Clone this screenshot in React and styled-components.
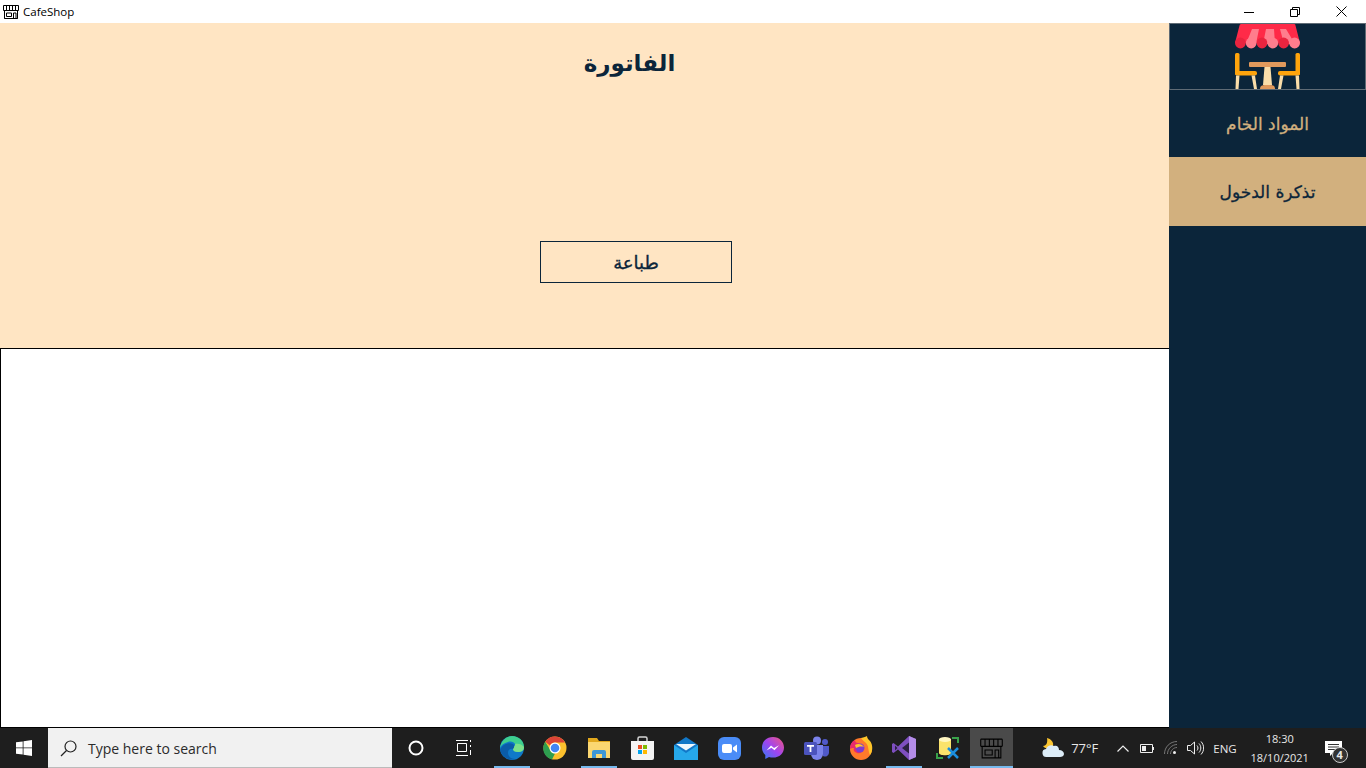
import React from 'react';
import styled, { createGlobalStyle } from 'styled-components';

const GlobalStyle = createGlobalStyle`
    html, body {
        margin: 0;
        padding: 0;
        width: 1366px;
        height: 768px;
        overflow: hidden;
        background: #fff;
        font-family: "Liberation Sans", Arial, sans-serif;
    }
`;

const Screen = styled.div`
    width: 1366px;
    height: 768px;
    display: flex;
    flex-direction: column;
`;

const TitleBar = styled.div`
    height: 23px;
    flex: none;
    display: flex;
    align-items: center;
    background: #fff;
    padding-left: 3px;
    font-family: "Open Sans", "Noto Sans", sans-serif;
    font-size: 11.5px;
    color: #000;
`;

const AppName = styled.span`
    margin-left: 4px;
    flex: 1;
`;

const WinButtons = styled.div`
    display: flex;
    margin-right: 2px;
`;

const WinButton = styled.div`
    width: 46px;
    height: 23px;
    display: flex;
    align-items: center;
    justify-content: center;
`;

const Body = styled.div`
    flex: 1;
    display: flex;
    min-height: 0;
`;

const Content = styled.div`
    flex: 1;
    display: flex;
    flex-direction: column;
`;

const Header = styled.div`
    height: 325px;
    flex: none;
    background: #ffe5c3;
    display: flex;
    flex-direction: column;
    color: #0b253a;
    font-family: "DejaVu Sans", sans-serif;
`;

const Title = styled.h1`
    margin: 24px 0 0 90px;
    font-size: 23px;
    line-height: 32px;
    font-weight: 700;
    text-align: center;
`;

const PrintButton = styled.button`
    width: 192px;
    height: 42px;
    margin: 162px 0 0 540px;
    padding: 0;
    box-sizing: border-box;
    background: transparent;
    border: 1px solid #0b253a;
    color: #0b253a;
    font-family: "DejaVu Sans", sans-serif;
    font-size: 18px;
    font-weight: 400;
    -webkit-text-stroke: 0.35px #0b253a;
`;

const Report = styled.div`
    flex: 1;
    background: #fff;
    border: 1px solid #000;
    border-right: none;
`;

const Sidebar = styled.div`
    width: 197px;
    flex: none;
    background: #0b253a;
    display: flex;
    flex-direction: column;
    font-family: "DejaVu Sans", sans-serif;
`;

const LogoBox = styled.div`
    height: 67px;
    box-sizing: border-box;
    border: 1px solid #5f6b75;
    overflow: hidden;
    display: flex;
    justify-content: center;
`;

const NavItem = styled.div`
    height: ${p => (p.$active ? 69 : 67)}px;
    display: flex;
    align-items: center;
    justify-content: center;
    font-size: 17px;
    font-weight: 400;
    -webkit-text-stroke: 0.3px ${p => (p.$active ? '#0b253a' : '#d2b07e')};
    background: ${p => (p.$active ? '#d2b07e' : 'transparent')};
    color: ${p => (p.$active ? '#0b253a' : '#d2b07e')};
`;

const Taskbar = styled.div`
    height: 40px;
    flex: none;
    display: flex;
    align-items: stretch;
    background: #1e1e1e;
    color: #fff;
    font-family: "Open Sans", "Noto Sans", sans-serif;
`;

const StartButton = styled.div`
    width: 48px;
    display: flex;
    align-items: center;
    justify-content: center;
`;

const SearchBox = styled.div`
    width: 344px;
    box-sizing: border-box;
    background: #f1f1f1;
    border-bottom: 1px solid #bbb;
    display: flex;
    align-items: center;
    padding: 1px 0 0 12px;
    gap: 11px;
    color: #2b2b2b;
    font-size: 14px;
`;

const ToolSlot = styled.div`
    width: 48px;
    display: flex;
    align-items: center;
    justify-content: center;
`;

const AppSlots = styled.div`
    display: flex;
    margin-left: 2px;
    margin-right: 29px;
`;

const AppSlot = styled.div`
    position: relative;
    width: 43.6px;
    display: flex;
    align-items: center;
    justify-content: center;
    background: ${p => (p.$focused ? '#4a4a4a' : 'transparent')};

    &::after {
        content: '';
        display: ${p => (p.$open || p.$focused ? 'block' : 'none')};
        position: absolute;
        bottom: 0;
        left: ${p => (p.$focused ? 0 : 4)}px;
        right: ${p => (p.$focused ? 0 : 4)}px;
        height: 2px;
        background: #76b9ed;
    }
`;

const Tray = styled.div`
    flex: 1;
    display: flex;
    align-items: center;
    font-size: 12px;
    color: #e8e8e8;
`;

const Temp = styled.span`
    margin: 0 13px 0 7px;
    font-size: 13px;
`;

const TrayIcon = styled.div`
    width: 24px;
    display: flex;
    justify-content: center;
`;

const Lang = styled.span`
    margin: 0 6px 0 6px;
    font-size: 11.5px;
`;

const Clock = styled.div`
    width: 74px;
    font-size: 11px;
    text-align: center;
    line-height: 19px;
`;

const Notify = styled.div`
    position: relative;
    margin-left: 8px;
    width: 24px;
    display: flex;
`;

const Badge = styled.span`
    position: absolute;
    left: 7px;
    top: 6px;
    width: 14px;
    height: 14px;
    border-radius: 50%;
    background: #333;
    border: 1px solid #ccc;
    display: flex;
    align-items: center;
    justify-content: center;
    font-size: 11px;
    font-weight: 700;
`;

const ShowDesktop = styled.div`
    width: 1px;
    margin-left: 15px;
    background: #777;
`;

const ShopGlyph = ({ color = '#000', size = 16, weight = 1 }) => (
    <svg width={size} height={size} viewBox="0 0 16 16" fill="none" stroke={color} strokeWidth={weight}>
        <path d="M.5 1.500h15M.5 6.500h15M.5 1.500v5M15.500 1.500v5M3.500 1.500v5M6.500 1.500v5M9.500 1.500v5M12.500 1.500v5" />
        <path d="M1.500 6.500v8h13v-8M1.500 14.500h13M3.500 9h5v3.500h-5zM10.500 14.500V9h2.500v5.500" />
    </svg>
);

const Logo = () => (
    <svg width="65" height="65" viewBox="0 0 65 65">
        <path d="M6 0h53a1.500 1.500 0 0 1 1.500 1.500L65 19H0L4.500 1.500A1.500 1.500 0 0 1 6 0z" fill="#ff2a48" />
        <path d="M17 5h7l-3 15H11zM31 5h8l1 15H28zM51 5h-6l4 15h11z" fill="#ff7d8d" />
        <circle cx="5.400" cy="19" r="5.400" fill="#e9243f" />
        <circle cx="16.200" cy="19" r="5.400" fill="#ff7d8d" />
        <circle cx="27" cy="19" r="5.400" fill="#e9243f" />
        <circle cx="37.800" cy="19" r="5.400" fill="#ff7d8d" />
        <circle cx="48.600" cy="19" r="5.400" fill="#e9243f" />
        <circle cx="59.600" cy="19" r="5.400" fill="#ff7d8d" />
        <rect x="14" y="38" width="37" height="5" rx="1" fill="#e0995c" />
        <path d="M29.500 43h6l1.500 18h-9z" fill="#f9dda9" />
        <path d="M25 65c0-4 3-4 7.500-4s7.500 0 7.500 4z" fill="#e0995c" />
        <rect x="0" y="29" width="4.500" height="22" rx="1.500" fill="#ffa40c" />
        <rect x="0" y="47" width="22" height="4.500" rx="2" fill="#ffa40c" />
        <rect x="60.500" y="29" width="4.500" height="22" rx="1.500" fill="#ffa40c" />
        <rect x="43" y="47" width="22" height="4.500" rx="2" fill="#ffa40c" />
        <path d="M1 51.500h3.500L3.500 65H.5zM16.500 51.500H20L22 65h-3zM45 51.500h3.500L46 65h-3zM60.500 51.500H64L64.500 65h-3z" fill="#f9dda9" />
    </svg>
);

const WindowsLogo = () => (
    <svg width="16" height="16" viewBox="0 0 16 16" fill="#fff">
        <path d="M0 2.300l6.700-.9v6.100H0zM7.500 1.300L16 0v7.500H7.500zM0 8.300h6.700v6.300L0 13.700zM7.500 8.300H16V16l-8.500-1.200z" />
    </svg>
);

const Edge = () => (
    <svg width="26" height="26" viewBox="0 0 26 26">
        <circle cx="13" cy="13" r="12" fill="#0f79c9" />
        <path d="M1 13C2 5 8 1 13 1c7 0 12 5 12 11 0 4-3 5-6 5-3 0-5-1-5-3 0-3 3-3 2-5-1-2-4-3-7-2-4 1-7 3-8 6z" fill="#3ecf8e" />
        <path d="M25 12c0 4-3 5-6 5s-5-1-5-3c0-3 3-3 2-5 3-1 7 0 9 3z" fill="#7be08a" />
        <path d="M14 14c-3-1-5 1-5 4 0 3 3 6 7 6-6 2-13-2-15-9 2-5 8-8 13-6 1 1 2 3 0 5z" fill="#0b5ca8" />
    </svg>
);

const Chrome = () => (
    <svg width="24" height="24" viewBox="0 0 24 24">
        <circle cx="12" cy="12" r="11.500" fill="#fbc02d" />
        <path d="M12 .5A11.500 11.500 0 0 1 22 6.500H12a5.500 5.500 0 0 0-5 3L2.200 5.800A11.500 11.500 0 0 1 12 .5z" fill="#dc4437" />
        <path d="M2.200 5.800L7 13.500a5.500 5.500 0 0 0 5 4l-3 6A11.500 11.500 0 0 1 2.200 5.800z" fill="#2e9e4f" />
        <circle cx="12" cy="12" r="5.500" fill="#fff" />
        <circle cx="12" cy="12" r="4.300" fill="#4285f4" />
    </svg>
);

const Explorer = () => (
    <svg width="22" height="20" viewBox="0 0 22 20">
        <path d="M0 0h9l2 3h11v17H0z" fill="#e2a81d" />
        <rect y="4" width="22" height="16" fill="#fbd771" />
        <path d="M4 20v-6a2 2 0 0 1 2-2h10a2 2 0 0 1 2 2v6h-4v-4H8v4z" fill="#3f97d6" />
    </svg>
);

const Store = () => (
    <svg width="23" height="24" viewBox="0 0 23 24">
        <path d="M7 6V2.500Q7 1 8.500 1h6Q16 1 16 2.500V6" fill="none" stroke="#d5d5d5" strokeWidth="1.500" />
        <path d="M0 5h23v17a2 2 0 0 1-2 2H2a2 2 0 0 1-2-2z" fill="#f4f4f4" />
        <rect x="7" y="9" width="4" height="4" fill="#ea4f25" />
        <rect x="12" y="9" width="4" height="4" fill="#7fba00" />
        <rect x="7" y="14" width="4" height="4" fill="#00a4ef" />
        <rect x="12" y="14" width="4" height="4" fill="#ffb900" />
    </svg>
);

const Mail = () => (
    <svg width="24" height="23" viewBox="0 0 24 23">
        <path d="M0 8L12 0l12 8v15H0z" fill="#1177c7" />
        <path d="M0 8l12 8 12-8v15H0z" fill="#26a8ea" />
        <path d="M2 7h20l-10 6.500z" fill="#eef7fd" />
    </svg>
);

const Zoom = () => (
    <svg width="23" height="23" viewBox="0 0 23 23">
        <rect width="23" height="23" rx="6" fill="#4a8cf7" />
        <rect x="4" y="7" width="10" height="9" rx="2" fill="#fff" />
        <path d="M15 10.500l4-3v8l-4-3z" fill="#fff" />
    </svg>
);

const Messenger = () => (
    <svg width="24" height="24" viewBox="0 0 24 24">
        <defs>
            <linearGradient id="msg" x1="0" y1="1" x2="1" y2="0">
                <stop offset="0" stopColor="#2f7cf6" />
                <stop offset=".5" stopColor="#a044f0" />
                <stop offset="1" stopColor="#f3577f" />
            </linearGradient>
        </defs>
        <path d="M12 1C5.500 1 1 5.500 1 11.500c0 3 1.200 5.600 3.300 7.400V23l3.700-2c1.300.4 2.600.6 4 .6 6.500 0 11-4.500 11-10.100S18.500 1 12 1z" fill="url(#msg)" />
        <path d="M5.500 14.500l4.500-5 3 2.500 5-2.800-4.500 5-3-2.500z" fill="#fff" />
    </svg>
);

const Teams = () => (
    <svg width="25" height="24" viewBox="0 0 25 24">
        <circle cx="13" cy="4.500" r="4" fill="#7b83eb" />
        <circle cx="21" cy="6" r="3" fill="#5059c9" />
        <path d="M17 10h8v7a4 4 0 0 1-6 3z" fill="#5059c9" />
        <path d="M7 9h12v9a6 6 0 0 1-12 0z" fill="#7b83eb" />
        <rect y="6" width="13" height="13" rx="1.500" fill="#4b53bc" />
        <path d="M3 9h7v1.800H7.400V16H5.600v-5.200H3z" fill="#fff" />
    </svg>
);

const Firefox = () => (
    <svg width="24" height="24" viewBox="0 0 24 24">
        <circle cx="12" cy="13" r="11" fill="#ff7a2b" />
        <path d="M12 2c3-1 5-1 6-2 0 2 1 3 3 5 3 4 3 10 0 14-2-4-1-9-4-12-2-2-4-3-5-5z" fill="#ffc62a" />
        <path d="M1 13C1 7 4 5 6 4c0 2 1 3 3 3 3 1 5 3 5 6 0 3-3 5-6 4-3-1-4-3-3-5-2 0-3 0-4 1z" fill="#e92a6b" />
        <circle cx="11" cy="12" r="4.500" fill="#7e3bd0" />
        <path d="M6 9c3-2 7-1 9 2-3-1-6 0-8 1z" fill="#ffc62a" />
    </svg>
);

const VisualStudio = () => (
    <svg width="24" height="24" viewBox="0 0 24 24">
        <path d="M17 0l7 3v18l-7 3-11-10.500L1.500 17 0 16V8l1.500-1L6 10.500z" fill="#7e4fc0" />
        <path d="M17 0l7 3v18l-7 3z" fill="#b48de8" />
        <path d="M17 6.500L10 12l7 5.500zM3 9.500v5l2.500-2.500z" fill="#2b2140" />
    </svg>
);

const DataTool = () => (
    <svg width="24" height="24" viewBox="0 0 24 24" fill="none">
        <path d="M3 3v14c0 3 12 3 12 0V3z" fill="#fbe36b" />
        <ellipse cx="9" cy="3.500" rx="6" ry="2.500" fill="#fff6c0" />
        <path d="M16 2h6v5M1 17v5h6" stroke="#39a24a" strokeWidth="2" />
        <path d="M12 12l10 10M22 12L12 22" stroke="#1c8fe0" strokeWidth="2.500" />
    </svg>
);

const Weather = () => (
    <svg width="22" height="20" viewBox="0 0 22 20">
        <path d="M1 8c3 0 5-3 4-8 4 1 7 4 6 8-1 3-7 4-10 0z" fill="#fbc531" />
        <path d="M5 19a4 4 0 0 1-1-8c1-3 5-5 8-3 3-1 5 1 5 4 3 0 5 2 5 4s-2 3-4 3z" fill="#dcecf7" />
    </svg>
);

const apps = [
    { icon: <Edge />, open: true },
    { icon: <Chrome /> },
    { icon: <Explorer />, open: true },
    { icon: <Store /> },
    { icon: <Mail /> },
    { icon: <Zoom /> },
    { icon: <Messenger /> },
    { icon: <Teams /> },
    { icon: <Firefox /> },
    { icon: <VisualStudio />, open: true },
    { icon: <DataTool /> },
    { icon: <ShopGlyph size={23} weight={0.75} />, focused: true },
];

export default function App() {
    return (
        <Screen>
            <GlobalStyle />
            <TitleBar>
                <ShopGlyph />
                <AppName>CafeShop</AppName>
                <WinButtons>
                    <WinButton>
                        <svg width="10" height="10" viewBox="0 0 10 10" stroke="#000"><path d="M0 5.500h10" /></svg>
                    </WinButton>
                    <WinButton>
                        <svg width="10" height="10" viewBox="0 0 10 10" fill="none" stroke="#000"><path d="M.5 2.500h7v7h-7zM2.500 2.500v-2h7v7h-2" /></svg>
                    </WinButton>
                    <WinButton>
                        <svg width="11" height="11" viewBox="0 0 11 11" stroke="#000"><path d="M.5.500l10 10M10.500.500l-10 10" /></svg>
                    </WinButton>
                </WinButtons>
            </TitleBar>
            <Body>
                <Content>
                    <Header>
                        <Title dir="rtl">الفاتورة</Title>
                        <PrintButton dir="rtl">طباعة</PrintButton>
                    </Header>
                    <Report />
                </Content>
                <Sidebar>
                    <LogoBox><Logo /></LogoBox>
                    <NavItem dir="rtl">المواد الخام</NavItem>
                    <NavItem dir="rtl" $active>تذكرة الدخول</NavItem>
                </Sidebar>
            </Body>
            <Taskbar>
                <StartButton><WindowsLogo /></StartButton>
                <SearchBox>
                    <svg width="17" height="17" viewBox="0 0 17 17" fill="none" stroke="#222" strokeWidth="1.200">
                        <circle cx="10.500" cy="6.500" r="5.500" />
                        <path d="M6.500 10.500L1 16" />
                    </svg>
                    Type here to search
                </SearchBox>
                <ToolSlot>
                    <svg width="16" height="16" viewBox="0 0 16 16" fill="none" stroke="#fff" strokeWidth="2">
                        <circle cx="8" cy="8" r="6.500" />
                    </svg>
                </ToolSlot>
                <ToolSlot>
                    <svg width="16" height="16" viewBox="0 0 16 16" fill="none" stroke="#fff">
                        <path d="M0 .5h12M0 15.500h12M1.500 3.500h9v8h-9zM14.500 0v2M14.500 5v2M14.500 10v5" />
                    </svg>
                </ToolSlot>
                <AppSlots>
                    {apps.map((app, i) => (
                        <AppSlot key={i} $open={app.open} $focused={app.focused}>{app.icon}</AppSlot>
                    ))}
                </AppSlots>
                <Tray>
                    <Weather />
                    <Temp>77°F</Temp>
                    <TrayIcon>
                        <svg width="12" height="7" viewBox="0 0 12 7" fill="none" stroke="#eee" strokeWidth="1.200"><path d="M.5 6.500L6 1l5.500 5.500" /></svg>
                    </TrayIcon>
                    <TrayIcon>
                        <svg width="15" height="9" viewBox="0 0 15 9" fill="none" stroke="#eee">
                            <path d="M.5.500h12v8H.5zM13.500 3v3" />
                            <rect x="2" y="2" width="4" height="5" fill="#eee" stroke="none" />
                        </svg>
                    </TrayIcon>
                    <TrayIcon>
                        <svg width="14" height="14" viewBox="0 0 14 14" fill="none" stroke="#777">
                            <path d="M.5 13C.5 6 6 .5 13 .5M3.500 13c0-5 4.500-9.500 9.500-9.500M6.500 13c0-3.500 3-6.500 6.500-6.500" />
                            <circle cx="10.500" cy="11.500" r="1.500" fill="#eee" stroke="none" />
                        </svg>
                    </TrayIcon>
                    <TrayIcon>
                        <svg width="17" height="14" viewBox="0 0 17 14" fill="none" stroke="#eee">
                            <path d="M.5 4.500h3L7.500 1v12l-4-3.500h-3zM10 4.500c1.300 1.500 1.300 3.500 0 5M12 2.500c2.400 2.600 2.400 6.400 0 9M14 .5c3.500 3.800 3.500 9.200 0 13" />
                        </svg>
                    </TrayIcon>
                    <Lang>ENG</Lang>
                    <Clock>18:30<br />18/10/2021</Clock>
                    <Notify>
                        <svg width="17" height="15" viewBox="0 0 17 15" fill="#fff"><path d="M0 0h17v12H8l-3 3v-3H0z" /><path d="M3 3.500h11M3 6h11M3 8.500h7" stroke="#333" /></svg>
                        <Badge>4</Badge>
                    </Notify>
                    <ShowDesktop />
                </Tray>
            </Taskbar>
        </Screen>
    );
}
